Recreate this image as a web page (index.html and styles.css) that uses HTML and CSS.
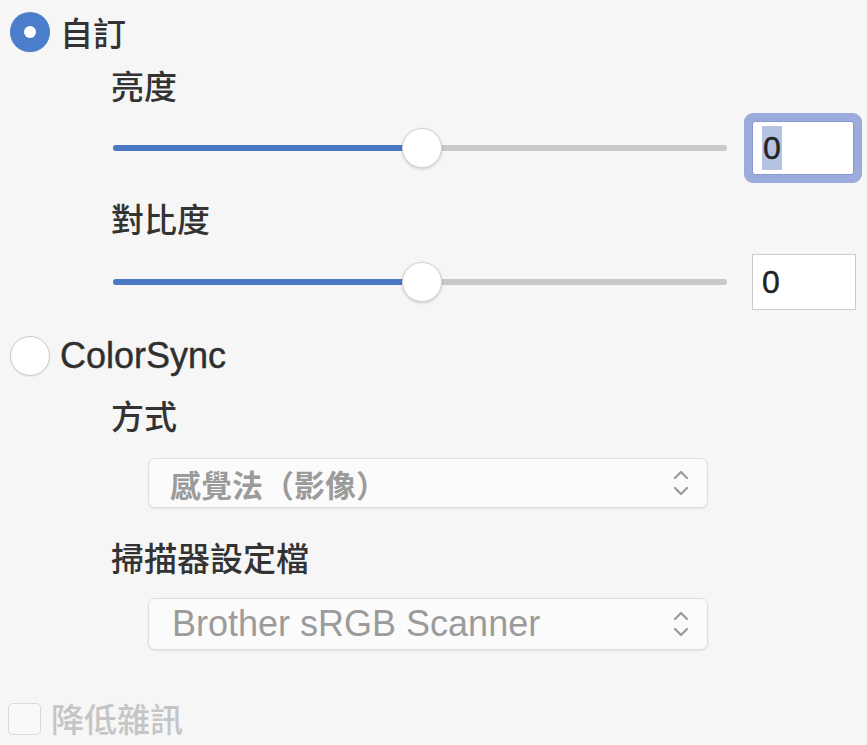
FILE: index.html
```html
<!DOCTYPE html>
<html lang="zh-Hant">
<head>
<meta charset="utf-8">
<title>Color Settings</title>
<link rel="stylesheet" href="styles.css">
</head>
<body>
<div class="panel">
  <div class="row radio-row r1">
    <span class="radio on"><span class="dot"></span></span>
    <span class="cjk-label">自訂</span>
  </div>
  <div class="row label-row l1"><span class="cjk-label">亮度</span></div>
  <div class="row slider-row s1">
    <div class="slider">
      <div class="track"></div>
      <div class="fill" style="width:309px"></div>
      <div class="knob" style="left:289px"></div>
    </div>
    <div class="field focused"><span class="sel">0</span></div>
  </div>
  <div class="row label-row l2"><span class="cjk-label">對比度</span></div>
  <div class="row slider-row s2">
    <div class="slider">
      <div class="track"></div>
      <div class="fill" style="width:309px"></div>
      <div class="knob" style="left:289px"></div>
    </div>
    <div class="field"><span>0</span></div>
  </div>
  <div class="row radio-row r2">
    <span class="radio"></span>
    <span class="latin-label">ColorSync</span>
  </div>
  <div class="row label-row l3"><span class="cjk-label">方式</span></div>
  <div class="row select-row p1">
    <div class="select">
      <span class="select-text cjk">感覺法（影像）</span>
      <svg class="chev" width="18" height="30" viewBox="0 0 18 30"><path d="M3 10 L9 4 L15 10" fill="none" stroke="#9a9a9a" stroke-width="2.2" stroke-linecap="round" stroke-linejoin="round"/><path d="M3 20 L9 26 L15 20" fill="none" stroke="#9a9a9a" stroke-width="2.2" stroke-linecap="round" stroke-linejoin="round"/></svg>
    </div>
  </div>
  <div class="row label-row l4"><span class="cjk-label">掃描器設定檔</span></div>
  <div class="row select-row p2">
    <div class="select">
      <span class="select-text">Brother sRGB Scanner</span>
      <svg class="chev" width="18" height="30" viewBox="0 0 18 30"><path d="M3 10 L9 4 L15 10" fill="none" stroke="#9a9a9a" stroke-width="2.2" stroke-linecap="round" stroke-linejoin="round"/><path d="M3 20 L9 26 L15 20" fill="none" stroke="#9a9a9a" stroke-width="2.2" stroke-linecap="round" stroke-linejoin="round"/></svg>
    </div>
  </div>
  <div class="row check-row">
    <span class="checkbox"></span>
    <span class="cjk-label disabled">降低雜訊</span>
  </div>
</div>
</body>
</html>
```

FILE: styles.css
```css
html, body {
  margin: 0;
  padding: 0;
  background: #f6f6f6;
  overflow: hidden;
}
body {
  font-family: "Liberation Sans", "Noto Sans CJK TC", sans-serif;
  color: #2e2e2e;
}
.panel {
  display: flex;
  flex-direction: column;
  width: 867px;
}
.row {
  display: flex;
  align-items: center;
}
.cjk-label {
  font-family: "Noto Sans CJK TC", sans-serif;
  font-size: 33px;
  font-weight: 500;
  line-height: 1;
  color: #333;
}
.latin-label {
  font-family: "Liberation Sans", sans-serif;
  font-size: 36px;
  line-height: 1;
  color: #2f2f2f;
  -webkit-text-stroke: 0.4px #2f2f2f;
}
.radio-row {
  padding-left: 10px;
  gap: 10px;
}
.r1 { height: 64px; }
.r2 { height: 76px; }
.radio {
  width: 40px;
  height: 40px;
  border-radius: 50%;
  box-sizing: border-box;
  background: #fff;
  border: 1.5px solid #c9c9c9;
  box-shadow: 0 1px 1px rgba(0,0,0,0.06);
  display: flex;
  align-items: center;
  justify-content: center;
}
.radio.on {
  background: #4a7ecb;
  border: none;
}
.radio .dot {
  width: 12px;
  height: 12px;
  border-radius: 50%;
  background: #fff;
}
.label-row {
  padding-left: 111px;
}
.l1 { height: 42px; }
.l2 { height: 56px; }
.l3 { height: 42px; }
.l4 { height: 54px; }

.slider-row {
  padding-left: 113px;
}
.s1 { height: 84px; }
.s2 { height: 72px; }
.slider {
  position: relative;
  width: 614px;
  height: 40px;
}
.track {
  position: absolute;
  left: 0;
  right: 0;
  top: 17px;
  height: 6px;
  border-radius: 3px;
  background: #c9c9c9;
}
.fill {
  position: absolute;
  left: 0;
  top: 17px;
  height: 6px;
  border-radius: 3px;
  background: #4a78c4;
}
.knob {
  position: absolute;
  top: 0;
  width: 40px;
  height: 40px;
  box-sizing: border-box;
  border-radius: 50%;
  background: #fff;
  border: 1px solid #d4d4d4;
  box-shadow: 0 1px 3px rgba(0,0,0,0.18);
}
.field {
  margin-left: 25px;
  width: 104px;
  height: 56px;
  box-sizing: border-box;
  background: #fff;
  border: 1.5px solid #cbcbcb;
  display: flex;
  align-items: center;
  padding-left: 9px;
  font-family: "Liberation Sans", sans-serif;
  font-size: 32px;
  color: #222;
  -webkit-text-stroke: 0.4px #222;
}
.field.focused {
  width: 102px;
  height: 54px;
  border: 1px solid #8799d4;
  border-radius: 3px;
  box-shadow: 0 0 0 8px #9aabdc;
  padding-left: 9px;
}
.field .sel {
  background: #b5c2e3;
  padding: 5px 1px;
  line-height: 34px;
}
.select-row {
  padding-left: 148px;
}
.p1 { height: 94px; }
.p2 { height: 80px; }
.select {
  width: 560px;
  height: 50px;
  box-sizing: border-box;
  background: #fbfbfb;
  border: 1px solid #dedede;
  border-radius: 7px;
  box-shadow: 0 1px 2px rgba(0,0,0,0.08);
  display: flex;
  align-items: center;
  padding: 0 17px 0 23px;
}
.p2 .select { height: 52px; }
.select-text {
  flex: 1;
  font-family: "Liberation Sans", sans-serif;
  font-size: 36px;
  line-height: 1;
  color: #9b9b9b;
  white-space: nowrap;
}
.select-text.cjk {
  font-family: "Noto Sans CJK TC", sans-serif;
  font-size: 31px;
  font-weight: 700;
  margin-left: -2px;
}
.chev {
  flex: none;
}
.check-row {
  height: 112px;
  padding-left: 8px;
  gap: 10px;
  align-items: flex-start;
  padding-top: 39px;
  box-sizing: border-box;
}
.checkbox {
  width: 33px;
  height: 32px;
  box-sizing: border-box;
  border: 1.5px solid #dadada;
  border-radius: 5px;
  background: #f9f9f9;
}
.check-row .cjk-label {
  margin-top: -1px;
}
.disabled {
  color: #c5c5c5;
}
```
